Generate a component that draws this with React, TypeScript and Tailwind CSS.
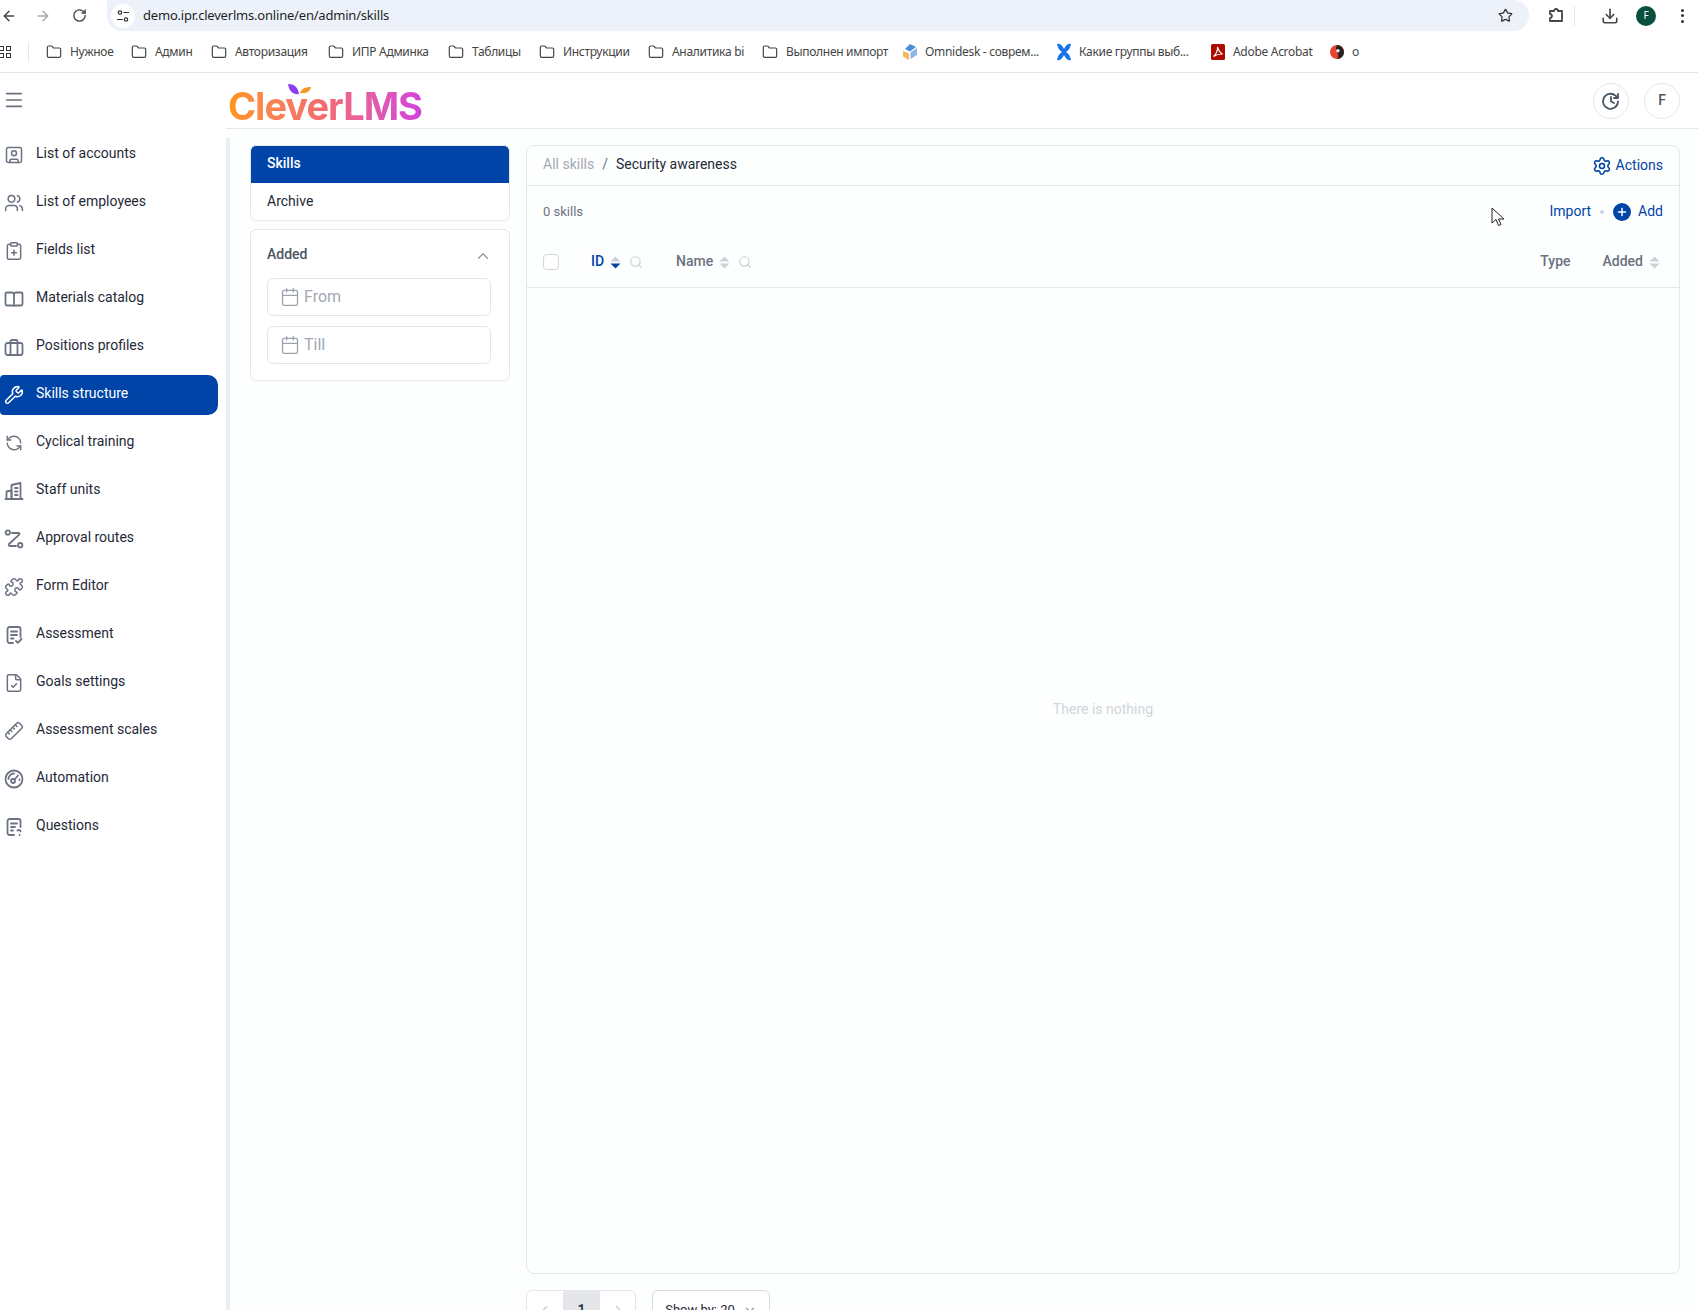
import React from "react";
import {
  ArrowLeft,
  ArrowRight,
  Calendar,
  ChevronDown,
  ChevronLeft,
  ChevronRight,
  ChevronUp,
  ClipboardPlus,
  Download,
  FileCheck,
  Folder,
  Menu,
  Plus,
  Puzzle,
  RefreshCcw,
  RotateCw,
  Ruler,
  Search,
  Settings,
  SquareUser,
  Star,
  Users,
  Wrench,
} from "lucide-react";

const iconProps = { size: 20, strokeWidth: 1.8 };

const BookIcon = () => (
  <svg width="20" height="20" viewBox="0 0 20 20" fill="none" stroke="currentColor" strokeWidth="1.8" strokeLinejoin="round">
    <path d="M10 5.500A2 2 0 0 0 8 3.500H3a1.500 1.500 0 0 0-1.500 1.500v10A1.500 1.500 0 0 0 3 16.500h5.500l1.500 .5 1.500-.5H17a1.500 1.500 0 0 0 1.500-1.500V5A1.500 1.500 0 0 0 17 3.500h-5a2 2 0 0 0-2 2V17" />
  </svg>
);

const BriefcaseIcon = () => (
  <svg width="20" height="20" viewBox="0 0 20 20" fill="none" stroke="currentColor" strokeWidth="1.8" strokeLinejoin="round">
    <rect x="1.500" y="6" width="17" height="12" rx="2" />
    <path d="M6.500 18V4.500A1.500 1.500 0 0 1 8 3h4a1.500 1.500 0 0 1 1.500 1.500V18" />
  </svg>
);

const BuildingIcon = () => (
  <svg width="20" height="20" viewBox="0 0 20 20" fill="none" stroke="currentColor" strokeWidth="1.8" strokeLinejoin="round" strokeLinecap="round">
    <path d="M1.500 18h17" />
    <path d="M2.500 18v-7.500l5-1V18" />
    <path d="M7.500 18V4l9-2v16" />
    <path d="M11 7h2.500M11 10.500h2.500M11 14h2.500" />
  </svg>
);

const RouteIcon = () => (
  <svg width="20" height="20" viewBox="0 0 20 20" fill="none" stroke="currentColor" strokeWidth="1.8" strokeLinejoin="round" strokeLinecap="round">
    <circle cx="3.800" cy="3.500" r="2.200" />
    <circle cx="16.200" cy="16.200" r="2.200" />
    <path d="M8 4h6.500a1 1 0 0 1 .7 1.700L5 15a1.200 1.200 0 0 0 .8 2H12" />
  </svg>
);

const AssessmentIcon = () => (
  <svg width="20" height="20" viewBox="0 0 20 20" fill="none" stroke="currentColor" strokeWidth="1.800" strokeLinejoin="round" strokeLinecap="round">
    <path d="M9 18H5.500A2 2 0 0 1 3.500 16V4a2 2 0 0 1 2-2h9a2 2 0 0 1 2 2v8" />
    <path d="M7 6.500h6M7 10h6M7 13.500h2.500" />
    <path d="M12 16l1.800 1.800L17.500 14" />
  </svg>
);

const AutomationIcon = () => (
  <svg width="20" height="20" viewBox="0 0 20 20" fill="none" stroke="currentColor" strokeWidth="1.800" strokeLinejoin="round" strokeLinecap="round">
    <circle cx="10" cy="10" r="8.500" />
    <circle cx="9" cy="12" r="2" />
    <path d="M10.500 10.500L14 6.500M4.500 10a5.500 5.500 0 0 1 5.500-5.500M15.500 10.500v.5" />
  </svg>
);

const QuestionsIcon = () => (
  <svg width="20" height="20" viewBox="0 0 20 20" fill="none" stroke="currentColor" strokeWidth="1.800" strokeLinejoin="round" strokeLinecap="round">
    <path d="M10 18H5.500a2 2 0 0 1-2-2V4a2 2 0 0 1 2-2h9a2 2 0 0 1 2 2v6" />
    <path d="M7 6.500h6M7 10h4M7 13.500h2" />
    <path d="M13.500 13.500c1-1 3-.5 3 .8M15.500 18h.01" />
  </svg>
);

const SortIcon = ({ active }: { active?: boolean }) => (
  <svg width="11" height="13" viewBox="0 0 11 13">
    <path d="M5.500 0.500L10.500 5.500H0.500Z" fill="#ccd1da" />
    <path d="M5.500 12.500L0.500 7.500H10.500Z" fill={active ? "#0044a8" : "#ccd1da"} />
  </svg>
);

const navItems = [
  { label: "List of accounts", icon: <SquareUser {...iconProps} /> },
  { label: "List of employees", icon: <Users {...iconProps} /> },
  { label: "Fields list", icon: <ClipboardPlus {...iconProps} /> },
  { label: "Materials catalog", icon: <BookIcon /> },
  { label: "Positions profiles", icon: <BriefcaseIcon /> },
  { label: "Skills structure", icon: <Wrench {...iconProps} />, active: true },
  { label: "Cyclical training", icon: <RefreshCcw size={18} strokeWidth={1.8} /> },
  { label: "Staff units", icon: <BuildingIcon /> },
  { label: "Approval routes", icon: <RouteIcon /> },
  { label: "Form Editor", icon: <Puzzle {...iconProps} /> },
  { label: "Assessment", icon: <AssessmentIcon /> },
  { label: "Goals settings", icon: <FileCheck {...iconProps} /> },
  { label: "Assessment scales", icon: <Ruler {...iconProps} className="-scale-x-100" /> },
  { label: "Automation", icon: <AutomationIcon /> },
  { label: "Questions", icon: <QuestionsIcon /> },
];

const folderIcon = <Folder size={16} strokeWidth={1.8} className="text-[#444746]" />;

const bookmarks = [
  { label: "Нужное", width: "w-[85px]", icon: folderIcon },
  { label: "Админ", width: "w-[80px]", icon: folderIcon },
  { label: "Авторизация", width: "w-[117px]", icon: folderIcon },
  { label: "ИПР Админка", width: "w-[120px]", icon: folderIcon },
  { label: "Таблицы", width: "w-[91px]", icon: folderIcon },
  { label: "Инструкции", width: "w-[109px]", icon: folderIcon },
  { label: "Аналитика bi", width: "w-[114px]", icon: folderIcon },
  { label: "Выполнен импорт", width: "w-[141px]", icon: folderIcon },
  {
    label: "Omnidesk - соврем...",
    width: "w-[154px]",
    icon: (
      <svg width="14" height="16" viewBox="0 0 14 16">
        <path d="M7 0l6 3-6 4.500L2 5z" fill="#4a90d9" />
        <path d="M0 7l6 2.500V16L0 12.500z" fill="#f5b75c" />
        <path d="M7.500 8.500L14 4v7l-6.500 4z" fill="#8ab8e6" />
      </svg>
    ),
  },
  {
    label: "Какие группы выб...",
    width: "w-[154px]",
    icon: (
      <svg width="14" height="18" viewBox="0 0 14 18" fill="#1a73e8">
        <path d="M0 1c3-1 5 1 7 5 2-4 4-6 7-5-1 4-2 6-5 8 3 2 4 4 5 8-3 1-5-1-7-5-2 4-4 6-7 5 1-4 2-6 5-8-3-2-4-4-5-8z" />
      </svg>
    ),
  },
  {
    label: "Adobe Acrobat",
    width: "w-[119px]",
    icon: (
      <svg width="14" height="16" viewBox="0 0 14 16">
        <rect width="14" height="16" rx="1.500" fill="#ad0b00" />
        <path d="M2.500 12.500C5 11 7 6 6.500 3c1 3 2.500 6 5 7-3 0-6 .5-9 2.500z" fill="none" stroke="#fff" strokeWidth="1.100" />
      </svg>
    ),
  },
  {
    label: "o",
    width: "w-[40px]",
    icon: (
      <svg width="14" height="16" viewBox="0 0 16 16">
        <circle cx="8" cy="8" r="8" fill="#e8432e" />
        <path d="M8 0a8 8 0 0 1 0 16c2-3 2-5 0-8-2-3-1-6 0-8z" fill="#222" />
        <circle cx="9" cy="6.500" r="2" fill="#eee" />
      </svg>
    ),
  },
];

const ChromeBar = () => (
  <div className="h-[73px] shrink-0 border-b border-[#e3e4e6] bg-white font-['Noto_Sans',sans-serif] text-[#1f1f1f]">
    <div className="flex h-[31px]">
      <div className="flex w-[107px] items-center text-[#444746]">
        <ArrowLeft size={16} strokeWidth={2.2} className="ml-[1px]" />
        <ArrowRight size={16} strokeWidth={2.2} className="ml-[18px] text-[#a8a8a8]" />
        <RotateCw size={15} strokeWidth={2.2} className="ml-[21px]" />
      </div>
      <div className="flex w-[1422px] items-center rounded-r-full rounded-bl-full bg-[#edf2fa]">
        <span className="ml-[4px] flex h-[24px] w-[24px] items-center justify-center rounded-full bg-white">
          <svg width="14" height="14" viewBox="0 0 14 14" fill="none" stroke="#333" strokeWidth="1.200">
            <circle cx="4" cy="3.500" r="1.700" />
            <path d="M7.500 3.500H13M1 10.500h6" />
            <circle cx="10" cy="10.500" r="1.700" />
          </svg>
        </span>
        <span className="ml-[8px] text-[13px] tracking-[-0.2px]">demo.ipr.cleverlms.online/en/admin/skills</span>
        <Star size={15} strokeWidth={2} className="ml-auto mr-[16px] text-[#333]" />
      </div>
      <div className="flex flex-1 items-center text-[#444746]">
        <svg width="18" height="18" viewBox="0 0 18 18" fill="none" stroke="currentColor" strokeWidth="1.800" strokeLinejoin="round" className="ml-[18px]">
          <path d="M3 4h4a2 2 0 0 1 4 0h4v10H3v-3a2 2 0 0 0 0-4z" />
        </svg>
        <span className="ml-[9px] h-[20px] w-px bg-[#d6eef5]" />
        <Download size={18} strokeWidth={2.2} className="ml-[26px]" />
        <span className="ml-[17px] flex h-[20px] w-[20px] items-center justify-center rounded-full bg-[#0b4f3f] text-[10px] text-white">F</span>
        <span className="ml-[25px] flex flex-col gap-[2.500px]">
          <i className="h-[3px] w-[3px] rounded-full bg-[#333]" />
          <i className="h-[3px] w-[3px] rounded-full bg-[#333]" />
          <i className="h-[3px] w-[3px] rounded-full bg-[#333]" />
        </span>
      </div>
    </div>
    <div className="flex h-[41px] items-center text-[12px] tracking-[-0.3px] text-[#444]">
      <div className="flex w-[28px] shrink-0">
        <div className="-ml-[1px] grid grid-cols-2 gap-[2px]">
          <i className="h-[5px] w-[5px] border border-[#333]" />
          <i className="h-[5px] w-[5px] border border-[#333]" />
          <i className="h-[5px] w-[5px] border border-[#333]" />
          <i className="h-[5px] w-[5px] border border-[#333]" />
        </div>
      </div>
      <span className="mr-[17px] h-[20px] w-px bg-[#d6eef5]" />
      {bookmarks.map((b) => (
        <div key={b.label} className={`${b.width} flex shrink-0 items-center gap-[8px]`}>
          {b.icon}
          <span className="whitespace-nowrap">{b.label}</span>
        </div>
      ))}
    </div>
  </div>
);

const Sidebar = () => (
  <aside className="w-[226px] shrink-0 bg-white text-[14px] text-[#1f2937]">
    <div className="flex h-[58px] items-center pb-[4px] pl-[3px] text-[#6b7280]">
      <Menu size={22} strokeWidth={1.8} />
    </div>
    {navItems.map((item) => (
      <div key={item.label} className="flex h-[48px] w-[218px] items-center">
        <div
          className={
            item.active
              ? "flex h-[40px] w-full items-center gap-[12px] rounded-r-[10px] rounded-l-[4px] bg-[#0044a8] pl-[4px] text-white"
              : "flex h-[40px] w-full items-center gap-[12px] pl-[4px]"
          }
        >
          <span className={item.active ? "flex w-[20px] justify-center text-white" : "flex w-[20px] justify-center text-[#6b7280]"}>
            {item.icon}
          </span>
          <span className="mb-[4px] leading-none">{item.label}</span>
        </div>
      </div>
    ))}
  </aside>
);

const DateInput = ({ placeholder }: { placeholder: string }) => (
  <div className="flex h-[38px] items-center gap-[4px] rounded-[6px] border border-[#e4e6ec] bg-white pl-[12px] text-[16px] text-[#a3a8b3]">
    <Calendar size={20} strokeWidth={1.6} className="text-[#9ca3af]" />
    <span className="mb-[1px]">{placeholder}</span>
  </div>
);

const LeftPanel = () => (
  <div className="flex w-[260px] shrink-0 flex-col gap-[8px] text-[14px]">
    <div className="overflow-hidden rounded-[6px] border border-[#e4e6ec] bg-white">
      <div className="flex h-[37px] items-center bg-[#0044a8] pb-[2px] pl-[16px] font-medium text-white">Skills</div>
      <div className="flex h-[37px] items-center pl-[16px] text-[#1f2937]">Archive</div>
    </div>
    <div className="flex h-[152px] flex-col rounded-[6px] border border-[#e4e6ec] bg-white pl-[16px] pr-[18px]">
      <div className="flex h-[48px] shrink-0 items-center justify-between pt-[1px] font-medium text-[#4b5563]">
        <span>Added</span>
        <ChevronUp size={18} strokeWidth={1.6} className="mr-[-1px] mt-[2px] text-[#8b919d]" />
      </div>
      <div className="flex flex-col gap-[10px]">
        <DateInput placeholder="From" />
        <DateInput placeholder="Till" />
      </div>
    </div>
  </div>
);

const MainCard = () => (
  <div className="flex w-[1154px] flex-col">
    <div className="flex h-[1129px] flex-col rounded-[8px] border border-[#e4e6ec] bg-[#fdfefe] text-[14px]">
      <div className="flex h-[40px] shrink-0 items-center justify-between border-b border-[#e4e6ec] px-[16px]">
        <div className="mb-[2px] flex items-center gap-[8px]">
          <span className="text-[#a3a8b3]">All skills</span>
          <span className="text-[#6b7280]">/</span>
          <span className="text-[#1f2937]">Security awareness</span>
        </div>
        <div className="flex items-center gap-[4px] text-[#0044a8]">
          <Settings size={20} strokeWidth={1.9} className="mt-[1px]" />
          <span className="mb-[1px]">Actions</span>
        </div>
      </div>
      <div className="flex h-[51px] shrink-0 items-center justify-between px-[16px]">
        <span className="text-[13px] text-[#6b7280]">0 skills</span>
        <div className="flex items-center text-[#0044a8]">
          <span className="mb-[1px]">Import</span>
          <span className="mx-[9px] h-[4px] w-[4px] rounded-full bg-[#c5d3e8]" />
          <span className="mr-[7px] flex h-[18px] w-[18px] items-center justify-center rounded-full bg-[#0044a8] text-white">
            <Plus size={12} strokeWidth={3} />
          </span>
          <span className="mb-[1px]">Add</span>
        </div>
      </div>
      <div className="flex h-[51px] shrink-0 items-center border-b border-[#e4e6ec] pl-[16px] pr-[19px] font-medium text-[#6b7280]">
        <span className="h-[16px] w-[16px] rounded-[4px] border border-[#d1d5db] bg-white" />
        <span className="ml-[32px] mb-[1px] text-[#0044a8]">ID</span>
        <span className="ml-[6px] flex"><SortIcon active /></span>
        <Search size={14} strokeWidth={2} className="ml-[8px] text-[#ccd1da]" />
        <span className="ml-[33px] mb-[1px]">Name</span>
        <span className="ml-[6px] flex"><SortIcon /></span>
        <Search size={14} strokeWidth={2} className="ml-[8px] text-[#ccd1da]" />
        <span className="ml-auto mb-[1px]">Type</span>
        <span className="ml-[32px] mb-[1px]">Added</span>
        <span className="ml-[6px] flex"><SortIcon /></span>
      </div>
      <div className="flex flex-1 items-center justify-center pb-[143px] text-[#d1d5db]">There is nothing</div>
    </div>
    <div className="mt-[16px] flex items-start gap-[16px] text-[14px] text-[#1f2937]">
      <div className="flex h-[40px] w-[110px] overflow-hidden rounded-[6px] border border-[#e4e6ec] bg-white">
        <span className="flex w-[36px] items-center justify-center text-[#c4c8d0]"><ChevronLeft size={14} /></span>
        <span className="flex w-[37px] items-center justify-center bg-[#e5e6ea] font-medium">1</span>
        <span className="flex flex-1 items-center justify-center text-[#c4c8d0]"><ChevronRight size={14} /></span>
      </div>
      <div className="flex h-[40px] w-[118px] items-center justify-center gap-[8px] rounded-[6px] border border-[#d5d9e0] bg-white text-[13px]">
        <span>Show by: 20</span>
        <ChevronDown size={14} className="text-[#8b919d]" />
      </div>
    </div>
  </div>
);

export default function App() {
  return (
    <div className="relative h-[1310px] w-[1698px] overflow-hidden bg-[#fdfefe] font-['Roboto',sans-serif]">
      <ChromeBar />
      <div className="flex">
        <Sidebar />
        <div className="flex-1">
          <header className="flex h-[56px] items-center justify-between border-b border-[#e4e6ec] bg-white pr-[18px]">
            <div className="relative ml-[2px] mt-[13px]">
              <span className="absolute left-[60px] top-[-3px]">
                <svg width="23" height="11" viewBox="0 0 23 11">
                  <path d="M0 0c6 0 10 3 11 10C5 11 1 7 0 0z" fill="#8a3df0" />
                  <path d="M12 9c1-4 5-6 11-6-1 5-5 7-11 6z" fill="#f59a2a" />
                </svg>
              </span>
              <span className="bg-gradient-to-r from-[#ff9516] via-[#f46a70] to-[#d43fdc] bg-clip-text font-['Inter',sans-serif] text-[38px] leading-none font-bold tracking-[-1px] text-transparent">
                CleverLMS
              </span>
            </div>
            <div className="flex items-center gap-[15px]">
              <span className="flex h-[36px] w-[36px] items-center justify-center rounded-full border border-[#e4e6ec] text-[#4b5563]">
                <svg width="20" height="20" viewBox="0 0 20 20" fill="none" stroke="currentColor" strokeWidth="1.800" strokeLinecap="round" strokeLinejoin="round" className="-scale-x-100">
                  <path d="M3 10.500a7.500 7.500 0 1 0 2.500-5.800L3 7M3 3v4h4" />
                  <path d="M10 6v4.500l-3 1.500" />
                </svg>
              </span>
              <span className="flex h-[36px] w-[36px] items-center justify-center rounded-full border border-[#e4e6ec] text-[14px] font-medium text-[#4b5563]">F</span>
            </div>
          </header>
          <div className="mt-[9px] flex gap-[16px] border-l-[4px] border-[#eceef5] pl-[20px] pt-[7px] pb-[40px]">
            <LeftPanel />
            <MainCard />
          </div>
        </div>
      </div>
      {/* mouse pointer caught in the capture */}
      <svg width="14" height="20" viewBox="0 0 14 20" className="absolute left-[1491px] top-[207px]">
        <path d="M1 1v15l4-3.500 2.500 6 2.500-1-2.500-5.500H13Z" fill="#fff" stroke="#222" strokeWidth="1" strokeLinejoin="round" />
      </svg>
    </div>
  );
}
